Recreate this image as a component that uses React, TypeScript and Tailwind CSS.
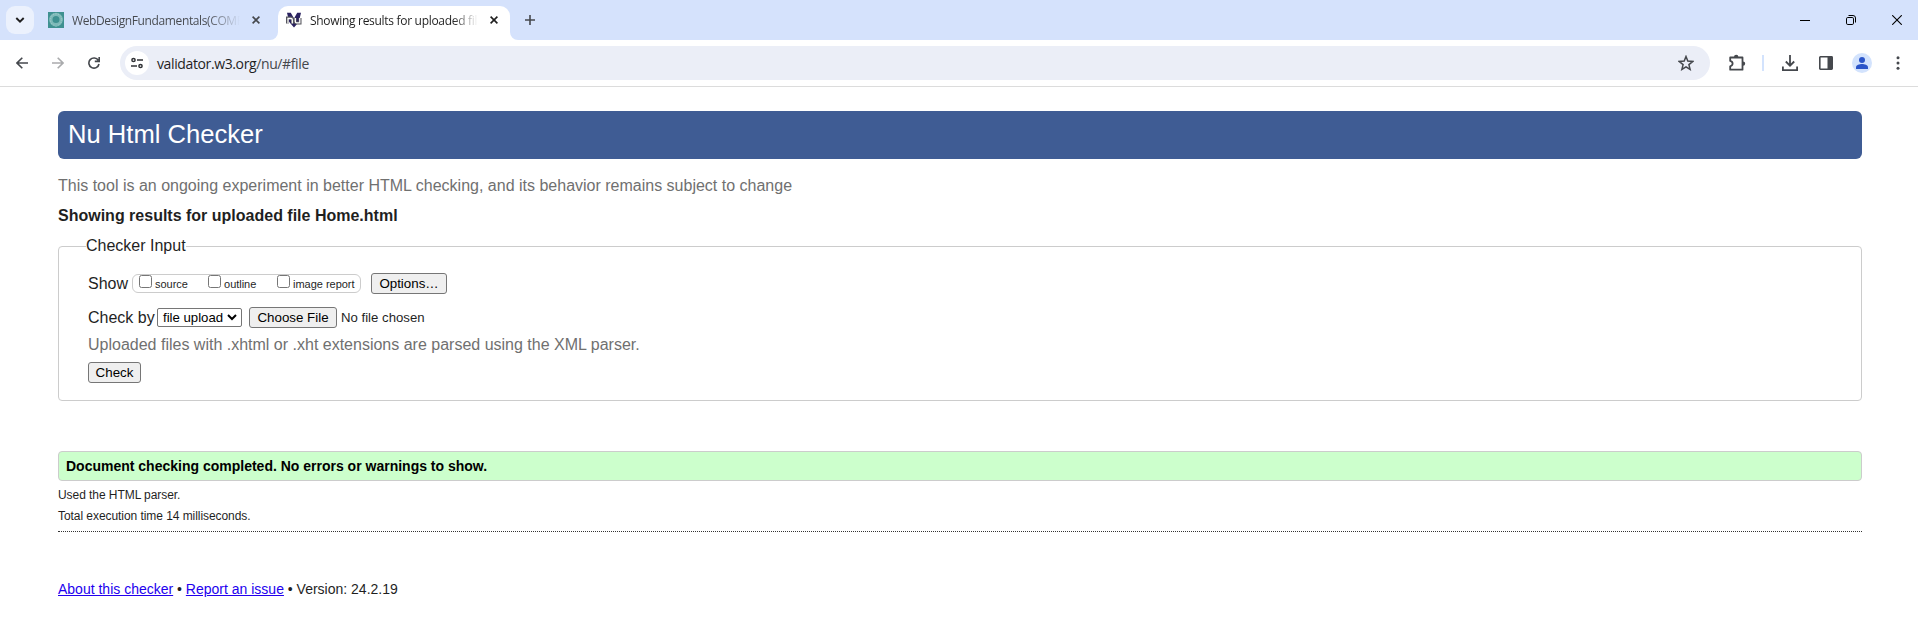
import React from "react";

const arial = "font-['Liberation_Sans',Arial,sans-serif]";

function Tab1Icon() {
  return (
    <svg width="16" height="16" viewBox="0 0 16 16" className="shrink-0">
      <rect width="16" height="16" fill="#3f9191" />
      <circle cx="8" cy="7.6" r="5.2" fill="none" stroke="#7db9b8" strokeWidth="3.4" />
      <circle cx="8" cy="7.6" r="5.8" fill="none" stroke="#a5d0ce" strokeWidth="1" strokeDasharray="1.2 1.4" />
      <circle cx="8" cy="7.4" r="2.6" fill="#3f9191" />
      <path d="M5.500 12.500 8 15l2.500-2.500z" fill="#7db9b8" />
    </svg>
  );
}

function NuIcon() {
  return (
    <svg width="16" height="16" viewBox="0 0 16 16" className="shrink-0">
      <path d="M1 .8h3.800L8 6.500 11.200.8H15L12.800 10 8 15.500 3.200 10z" fill="#2a2260" />
      <path d="M1.500 11.500V6h3.500q1.500 0 1.500 1.500v4M9.200 6v3.500q0 1.500 1.500 1.500H14V6" fill="none" stroke="#55555d" strokeWidth="3" />
      <path d="M2 11.500V6.500h3q1.300 0 1.300 1.300v3.700M9.300 6v3.500q0 1.300 1.300 1.300h3.200V6" fill="none" stroke="#fff" strokeWidth="1.300" />
    </svg>
  );
}

function Cross({ color }: { color: string }) {
  return (
    <svg width="8" height="8" viewBox="0 0 8 8" className="shrink-0">
      <path d="M.6.6l6.800 6.800M7.400.6.6 7.400" stroke={color} strokeWidth="1.600" />
    </svg>
  );
}

function TabStrip() {
  return (
    <div className="flex h-10 bg-[#d5e2fc]">
      <div className="flex h-10 w-12 shrink-0 items-center pl-1.5">
        <div className="flex h-7 w-7 items-center justify-center rounded-[9px] bg-[#ebf1fd]">
          <svg width="10" height="8" viewBox="0 0 10 8">
            <path d="M1.300 2 5 5.700 8.700 2" fill="none" stroke="#1f1f1f" strokeWidth="1.900" />
          </svg>
        </div>
      </div>
      <div className="flex h-10 w-[222px] shrink-0 items-center">
        <Tab1Icon />
        <div className="ml-2 mt-0.5 w-[168px] overflow-hidden whitespace-nowrap bg-linear-to-r from-[#45484d] from-80% to-transparent bg-clip-text font-['Open_Sans','Noto_Sans',sans-serif] text-[12px] tracking-[-0.38px] text-transparent">
          WebDesignFundamentals(COMP
        </div>
        <div className="ml-3"><Cross color="#45484d" /></div>
      </div>
      <div className="flex h-10 w-2 items-end">
        <svg width="8" height="8"><path d="M8 0v8H0a8 8 0 0 0 8-8" fill="#fff" /></svg>
      </div>
      <div className="mt-1.5 flex h-[34px] w-[232px] shrink-0 items-center rounded-t-[10px] bg-white pb-1.5 pl-2">
        <NuIcon />
        <div className="ml-2 mt-0.5 w-[168px] overflow-hidden whitespace-nowrap bg-linear-to-r from-[#1f1f1f] from-85% to-transparent bg-clip-text font-['Open_Sans','Noto_Sans',sans-serif] text-[12px] tracking-[-0.3px] text-transparent">
          Showing results for uploaded file
        </div>
        <div className="ml-3"><Cross color="#1f1f1f" /></div>
      </div>
      <div className="flex h-10 w-2 items-end">
        <svg width="8" height="8"><path d="M0 0v8h8a8 8 0 0 1-8-8" fill="#fff" /></svg>
      </div>
      <div className="flex flex-1 items-center pl-[7px]">
        <svg width="10" height="10" viewBox="0 0 10 10">
          <path d="M5 0v10M0 5h10" stroke="#45484d" strokeWidth="1.600" />
        </svg>
      </div>
      <div className="flex items-center pr-4">
        <svg width="10" height="10" viewBox="0 0 10 10" className="mr-9"><path d="M0 5.500h10" stroke="#000" /></svg>
        <svg width="10" height="10" viewBox="0 0 10 10" className="mr-9">
          <rect x=".5" y="2.500" width="7" height="7" rx="1.300" fill="none" stroke="#000" />
          <path d="M2.500.5H7a2.500 2.500 0 0 1 2.500 2.500v4.500" fill="none" stroke="#000" />
        </svg>
        <svg width="10" height="10" viewBox="0 0 10 10"><path d="M.2.2l9.600 9.600M9.800.2.2 9.800" stroke="#000" strokeWidth="1.100" /></svg>
      </div>
    </div>
  );
}

function Arrow({ color, flip }: { color: string; flip?: boolean }) {
  return (
    <svg width="12" height="12" viewBox="0 0 12 12" className={flip ? "rotate-180" : ""}>
      <path d="M6.300.7 1 6l5.300 5.300M1 6h11" fill="none" stroke={color} strokeWidth="1.600" />
    </svg>
  );
}

function Toolbar() {
  return (
    <div className="flex h-[47px] items-center border-b border-[#dcdcdc] bg-white pl-4">
      <Arrow color="#45484d" />
      <div className="ml-6"><Arrow color="#aaabad" flip /></div>
      <svg width="12" height="12" viewBox="0 0 12 12" className="ml-6">
        <path d="M10.300 3.300A5.100 5.100 0 1 0 11 7M11.200 0v4.400H6.800" fill="none" stroke="#45484d" strokeWidth="1.600" />
      </svg>
      <div className="ml-5 flex h-[34px] w-[1590px] items-center rounded-full bg-[#ebeef7] pl-[5px]">
        <div className="flex h-6 w-6 items-center justify-center rounded-full bg-white">
          <svg width="12" height="12" viewBox="0 0 12 12" fill="none" stroke="#303236" strokeWidth="1.500">
            <circle cx="2.500" cy="3" r="1.600" /><path d="M6 3h6M0 9h6" /><circle cx="9.500" cy="9" r="1.600" />
          </svg>
        </div>
        <div className="ml-2 flex-1 font-['Open_Sans','Noto_Sans',sans-serif] text-[14px] text-[#45474b] tracking-[-0.38px]">
          <span className="text-[#1f1f1f]">validator.w3.org</span>/nu/#file
        </div>
        <svg width="16" height="16" viewBox="0 0 16 16" className="mr-4">
          <path d="m8 1.500 1.800 4.600 4.900.4-3.800 3.100 1.200 4.800L8 11.800l-4.100 2.600 1.200-4.800-3.800-3.100 4.900-.4z" fill="none" stroke="#45484d" strokeWidth="1.500" />
        </svg>
      </div>
      <svg width="18" height="18" viewBox="0 0 18 18" className="ml-[18px]">
        <path d="M2.200 3.500H14.500V15.700H2.200V12.300Q4.600 11.700 4.600 9.600T2.200 6.900z" fill="none" stroke="#45484d" strokeWidth="1.800" strokeLinejoin="round" />
        <path d="M6 3a2.200 2.200 0 0 1 4.400 0zM15 7.400a2.200 2.200 0 0 1 0 4.400z" fill="#45484d" />
      </svg>
      <div className="ml-4 h-4 w-0.5 bg-[#d3e3fd]" />
      <svg width="16" height="16" viewBox="0 0 16 16" className="ml-[18px]" fill="none" stroke="#45484d" strokeWidth="1.800">
        <path d="M8 0v10.500M3.800 6.500 8 10.700l4.200-4.200M.9 11.500v3.600h14.200v-3.600" />
      </svg>
      <svg width="14" height="14" viewBox="0 0 14 14" className="ml-[21px]">
        <rect x=".8" y=".8" width="12.400" height="12.400" rx=".6" fill="none" stroke="#45484d" strokeWidth="1.600" />
        <path d="M8.500 1H13v12H8.500z" fill="#45484d" />
      </svg>
      <svg width="20" height="20" viewBox="0 0 20 20" className="ml-[19px]">
        <circle cx="10" cy="10" r="10" fill="#d3e3fd" />
        <circle cx="10" cy="7" r="3" fill="#2b55c9" />
        <path d="M4 16v-1.800C4 12 7.500 11 10 11s6 1 6 3.200V16z" fill="#2b55c9" />
      </svg>
      <svg width="4" height="14" viewBox="0 0 4 14" className="ml-6" fill="#45484d">
        <circle cx="2" cy="1.700" r="1.500" /><circle cx="2" cy="7" r="1.500" /><circle cx="2" cy="12.300" r="1.500" />
      </svg>
    </div>
  );
}

function Check({ label, className }: { label: string; className: string }) {
  return (
    <label className={"flex " + className}>
      <span className="h-[13px] w-[13px] shrink-0 rounded-[2.5px] border border-[#767676] bg-white" />
      <span className="ml-[3px] mt-[3px] whitespace-nowrap text-[11px] leading-[13px] tracking-[-0.02px]">{label}</span>
    </label>
  );
}

function Button({ children, className }: { children: React.ReactNode; className: string }) {
  return (
    <button className={"flex h-[21px] shrink-0 items-center justify-center rounded-[3px] border border-[#767676] bg-[#efefef] text-[13.333px] leading-[15px] text-black " + className}>
      {children}
    </button>
  );
}

export default function App() {
  return (
    <div className="h-[633px] overflow-hidden bg-white">
      <TabStrip />
      <Toolbar />
      <main className={"pl-[58px] pr-14 pt-6 text-base leading-[18px] text-[#1f1f1f] " + arial}>
        <h1 className="flex h-12 items-center rounded-[6px] bg-[#3f5c94] pb-0.5 pl-2.5 text-[25.6px] text-white">Nu Html Checker</h1>
        <p className="mt-[18px] text-[#707070]">This tool is an ongoing experiment in better HTML checking, and its behavior remains subject to change</p>
        <h2 className="mt-3 font-bold text-[#1f1f1f]">Showing results for uploaded file Home.html</h2>
        <fieldset className="mt-3 h-[164px] rounded-[4px] border border-[#ccc] pl-[27px]">
          <legend className="leading-[18px]">Checker Input</legend>
          <div className="ml-[2px] mt-[18px] flex h-[21px] items-center">
            <span>Show</span>
            <div className="ml-1 flex h-[19px] w-[229px] rounded-[6px] border border-[#ccc] pl-1.5">
              <Check label="source" className="w-[69px]" />
              <Check label="outline" className="w-[69px]" />
              <Check label="image report" className="" />
            </div>
            <Button className="ml-2.5 w-[76px]">Options…</Button>
          </div>
          <div className="ml-[2px] mt-[13px] flex h-[21px] items-center">
            <span className="w-[69px]">Check by</span>
            <div className="flex h-[19px] w-[85px] items-center rounded-[2px] border border-[#767676] bg-white pl-[5px] text-[13.2px] text-black">
              file upload
              <svg width="10" height="7" viewBox="0 0 10 7" className="ml-1"><path d="M1 1l4 4 4-4" fill="none" stroke="#000" strokeWidth="2" /></svg>
            </div>
            <Button className="ml-[7px] w-[88px]">Choose File</Button>
            <span className="ml-1 text-[13.2px]">No file chosen</span>
          </div>
          <p className="ml-[2px] mt-2 text-[#707070]">Uploaded files with .xhtml or .xht extensions are parsed using the XML parser.</p>
          <Button className="ml-[2px] mt-[8px] w-[53px]">Check</Button>
        </fieldset>
        <p className="mt-[50px] flex h-[30px] items-center rounded-[4px] border border-[#ccc] bg-[#cfc] pl-[7px] text-[14px] font-bold text-black">
          Document checking completed. No errors or warnings to show.
        </p>
        <p className="mt-[5px] text-[12px] tracking-[-0.06px]">Used the HTML parser.</p>
        <p className="mt-[3px] text-[12px] tracking-[-0.06px]">Total execution time 14 milliseconds.</p>
        <div className="mt-[6px] border-t border-dotted border-[#333]" />
        <footer className="mt-12 text-[14px]">
          <a className="text-[#20e] underline">About this checker</a> • <a className="text-[#20e] underline">Report an issue</a> • Version: 24.2.19
        </footer>
      </main>
    </div>
  );
}
